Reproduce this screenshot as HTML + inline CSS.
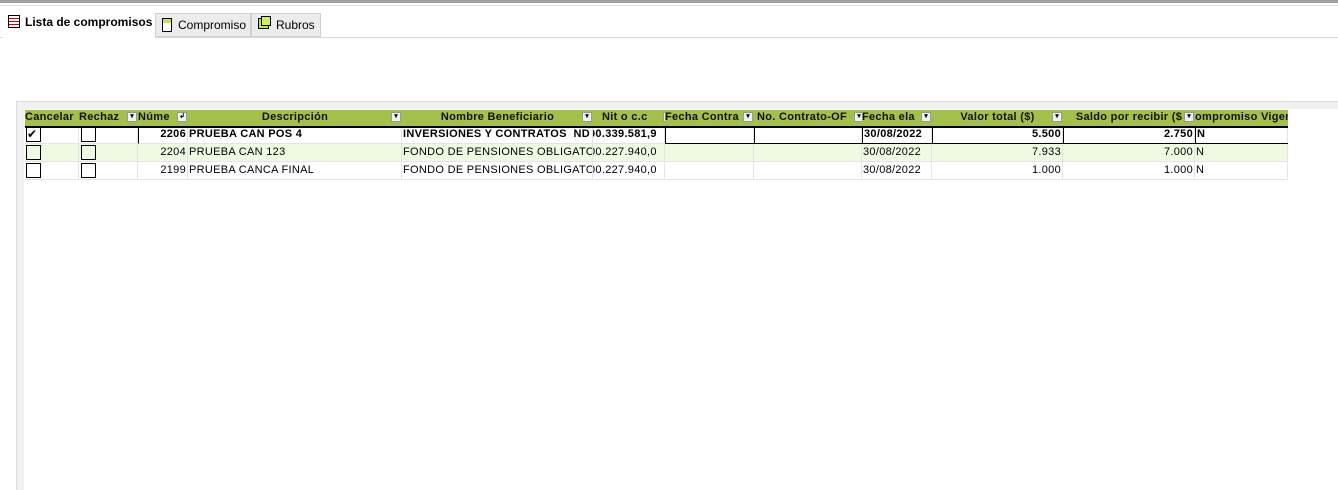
<!DOCTYPE html><html><head><style>
body{margin:0;width:1338px;height:490px;background:#fff;position:relative;overflow:hidden;font-family:"Liberation Sans",Arial,sans-serif;}
.a{position:absolute;box-sizing:border-box;white-space:nowrap}
.h{position:absolute;top:110px;height:16px;background:#a3c14a;font-size:11px;font-weight:bold;color:#111;line-height:15px;white-space:nowrap;overflow:hidden;text-align:center;border-right:2px solid #e8e8e8;letter-spacing:0.3px}
.dd{position:absolute;right:1px;top:2px;width:10px;height:10px;background:#f0f0f0;border:1px solid #999;box-sizing:border-box;font-size:7px;line-height:7px;text-align:center;color:#000;letter-spacing:0}
.c{position:absolute;height:18px;font-size:11px;line-height:17px;white-space:nowrap;overflow:hidden;color:#000;border-right:1px solid #e4e4e4;border-bottom:1px solid #e4e4e4;box-sizing:border-box;padding:0 1px;letter-spacing:0.3px}
.r{text-align:right}
.cb{position:absolute;width:15px;height:15px;border:1px solid #000;box-sizing:border-box;background:#fff}
</style></head><body>
<div class="a" style="left:0;top:0;width:1338px;height:3px;background:#a0a0a0"></div>
<div class="a" style="left:0;top:5px;width:1338px;height:1px;background:#e0e0e0"></div>
<div class="a" style="left:0;top:37px;width:1338px;height:1px;background:#d8d8d8"></div>
<div class="a" style="left:3px;top:11px;width:152px;height:27px;background:#fff;font-size:12px;font-weight:bold;line-height:22px;padding-left:22px">Lista de compromisos</div>
<div class="a" style="left:8px;top:15px;width:12px;height:13px;border:1px solid #000;background:repeating-linear-gradient(#fff 0 2px,#c00 2px 3px)"></div>
<div class="a" style="left:155px;top:13px;width:96px;height:24px;background:#ececec;border:1px solid #d0d0d0;font-size:12px;line-height:22px;padding-left:22px">Compromiso</div>
<div class="a" style="left:162px;top:18px;width:10px;height:14px;border:1px solid #000;background:linear-gradient(#cde04a 0 4px,#fff 4px)"></div>
<div class="a" style="left:251px;top:13px;width:70px;height:24px;background:#ececec;border:1px solid #d0d0d0;font-size:12px;line-height:22px;padding-left:24px">Rubros</div>
<div class="a" style="left:258px;top:18px;width:11px;height:11px;border:1px solid #000;background:#c8e04a"></div>
<div class="a" style="left:261px;top:16px;width:10px;height:10px;border:1px solid #000;background:#d6ec50"></div>
<div class="a" style="left:16px;top:101px;width:1322px;height:389px;border-top:1px solid #ddd;border-left:1px solid #ddd"></div>
<div class="a" style="left:17px;top:102px;width:1321px;height:7px;background:#f0f0f0"></div>
<div class="a" style="left:17px;top:102px;width:7px;height:388px;background:#f0f0f0"></div>
<div class="h" style="left:25px;width:54px;text-align:left">Cancelar</div>
<div class="h" style="left:79px;width:59px;text-align:left">Rechaz<span class="dd">▾</span></div>
<div class="h" style="left:138px;width:50px;text-align:left">Núme<span class="dd">↲</span></div>
<div class="h" style="left:188px;width:214px">Descripción<span class="dd">▾</span></div>
<div class="h" style="left:402px;width:191px">Nombre Beneficiario<span class="dd">▾</span></div>
<div class="h" style="left:593px;width:72px;text-align:left;padding-left:9px">Nit o c.c<span class="dd">▾</span></div>
<div class="h" style="left:665px;width:89px;text-align:left">Fecha Contra<span class="dd">▾</span></div>
<div class="h" style="left:754px;width:108px;text-align:left;padding-left:3px">No. Contrato-OF<span class="dd">▾</span></div>
<div class="h" style="left:862px;width:70px;text-align:left">Fecha ela<span class="dd">▾</span></div>
<div class="h" style="left:932px;width:131px">Valor total ($)<span class="dd">▾</span></div>
<div class="h" style="left:1063px;width:132px">Saldo por recibir ($<span class="dd">▾</span></div>
<div class="h" style="left:1195px;width:93px;text-align:right;border:0">ompromiso Vigen</div>

<div class="a" style="left:25px;top:144px;width:1263px;height:18px;background:#eefbe3"></div>

<div class="c" style="left:25px;top:126px;width:54px"></div><div class="cb" style="left:26px;top:127px;font-size:12px;line-height:12px">✔</div>
<div class="c" style="left:79px;top:126px;width:59px"></div><div class="cb" style="left:81px;top:127px"></div>
<div class="c r" style="left:138px;top:126px;width:50px;font-weight:bold;border-left:1px solid #000">2206</div>
<div class="c" style="left:188px;top:126px;width:214px;font-weight:bold">PRUEBA CAN POS 4</div>
<div class="c" style="left:402px;top:126px;width:191px;font-weight:bold">INVERSIONES Y CONTRATOS&nbsp; ND S/</div>
<div class="c" style="left:593px;top:126px;width:72px;font-weight:bold;text-indent:-5px">00.339.581,9</div>
<div class="c" style="left:665px;top:126px;width:89px;border-left:1px solid #000"></div>
<div class="c" style="left:754px;top:126px;width:108px;border-left:1px solid #000"></div>
<div class="c" style="left:862px;top:126px;width:70px;font-weight:bold;border-left:1px solid #000">30/08/2022</div>
<div class="c r" style="left:932px;top:126px;width:131px;font-weight:bold;border-left:1px solid #000">5.500</div>
<div class="c r" style="left:1063px;top:126px;width:132px;font-weight:bold;border-left:1px solid #000">2.750</div>
<div class="c" style="left:1195px;top:126px;width:93px;font-weight:bold;border-left:1px solid #000">N</div>
<div class="a" style="left:25px;top:126px;width:1263px;height:2px;background:#000"></div>
<div class="a" style="left:665px;top:143px;width:623px;height:1px;background:#000"></div>

<div class="c" style="left:25px;top:144px;width:54px"></div><div class="cb" style="left:26px;top:145px;background:#eefbe3"></div>
<div class="c" style="left:79px;top:144px;width:59px"></div><div class="cb" style="left:81px;top:145px;background:#eefbe3"></div>
<div class="c r" style="left:138px;top:144px;width:50px">2204</div>
<div class="c" style="left:188px;top:144px;width:214px">PRUEBA CAN 123</div>
<div class="c" style="left:402px;top:144px;width:191px">FONDO DE PENSIONES OBLIGATORI</div>
<div class="c" style="left:593px;top:144px;width:72px;text-indent:-5px">00.227.940,0</div>
<div class="c" style="left:665px;top:144px;width:89px"></div>
<div class="c" style="left:754px;top:144px;width:108px"></div>
<div class="c" style="left:862px;top:144px;width:70px">30/08/2022</div>
<div class="c r" style="left:932px;top:144px;width:131px">7.933</div>
<div class="c r" style="left:1063px;top:144px;width:132px">7.000</div>
<div class="c" style="left:1195px;top:144px;width:93px">N</div>

<div class="c" style="left:25px;top:162px;width:54px"></div><div class="cb" style="left:26px;top:163px"></div>
<div class="c" style="left:79px;top:162px;width:59px"></div><div class="cb" style="left:81px;top:163px"></div>
<div class="c r" style="left:138px;top:162px;width:50px">2199</div>
<div class="c" style="left:188px;top:162px;width:214px">PRUEBA CANCA FINAL</div>
<div class="c" style="left:402px;top:162px;width:191px">FONDO DE PENSIONES OBLIGATORI</div>
<div class="c" style="left:593px;top:162px;width:72px;text-indent:-5px">00.227.940,0</div>
<div class="c" style="left:665px;top:162px;width:89px"></div>
<div class="c" style="left:754px;top:162px;width:108px"></div>
<div class="c" style="left:862px;top:162px;width:70px">30/08/2022</div>
<div class="c r" style="left:932px;top:162px;width:131px">1.000</div>
<div class="c r" style="left:1063px;top:162px;width:132px">1.000</div>
<div class="c" style="left:1195px;top:162px;width:93px">N</div>
</body></html>
